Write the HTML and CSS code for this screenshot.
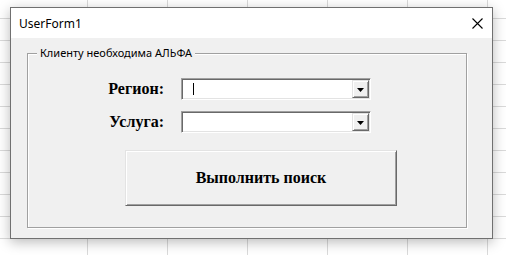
FILE: index.html
```html
<!DOCTYPE html>
<html lang="ru">
  <head>
    <meta charset="UTF-8" />
    <meta name="viewport" content="width=device-width, initial-scale=1.0" />
    <title>UserForm1</title>
    <link rel="stylesheet" href="styles.css">
  </head>
  <body>
    <div class="dialog">
      <div class="titlebar">
        <span class="title">UserForm1</span>
        <svg class="close" width="11" height="11" viewBox="0 0 11 11">
          <path d="M0.5 0.5 L10.5 10.5 M10.5 0.5 L0.5 10.5" stroke="#000" stroke-width="1.1" fill="none" />
        </svg>
      </div>

      <div class="client">
        <fieldset class="frame">
          <legend>Клиенту необходима АЛЬФА</legend>

          <div class="fields">
            <label class="lbl">Регион:</label>
            <div class="combo">
              <span class="caret"></span>
              <span class="drop">
                <svg width="7" height="4" viewBox="0 0 7 4"><polygon points="0,0 7,0 3.5,4" fill="#000" /></svg>
              </span>
            </div>

            <label class="lbl">Услуга:</label>
            <div class="combo">
              <span class="drop">
                <svg width="7" height="4" viewBox="0 0 7 4"><polygon points="0,0 7,0 3.5,4" fill="#000" /></svg>
              </span>
            </div>
          </div>

          <button class="search">Выполнить поиск</button>
        </fieldset>
      </div>
    </div>
  </body>
</html>
```

FILE: styles.css
```css
body {
  margin: 0;
  width: 506px;
  height: 255px;
  overflow: hidden;
  background-color: #fff;
  background-image:
    repeating-linear-gradient(to bottom, transparent 0, transparent 18px, #dadada 18px, #dadada 19px, transparent 19px, transparent 22px),
    repeating-linear-gradient(to right, transparent 0, transparent 79px, #dadada 79px, #dadada 80px);
  background-position: 0 0, 8px 0;
  background-repeat: repeat, no-repeat;
  background-size: 100% 22px, 100% 100%;
}
.dialog {
  margin: 7px 0 0 10px;
  width: 481px;
  height: 230px;
  border: 1px solid #707070;
  background: #f0f0f0;
  box-shadow: 0 3px 12px rgba(0, 0, 0, 0.28);
}
.titlebar {
  height: 30px;
  background: #fff;
  display: flex;
  align-items: center;
  justify-content: space-between;
  padding: 0 9px 0 8px;
}
.title {
  font-family: "Noto Sans", sans-serif;
  font-size: 12px;
  color: #000;
}
.close {
  display: block;
}
.client {
  height: 200px;
  overflow: hidden;
}
.frame {
  margin: 8px 25px 0 16px;
  padding: 18px 0 21px;
  border: 1px solid #a0a0a0;
  box-shadow: 1px 1px 0 #fff, inset 1px 1px 0 #fff;
  min-width: 0;
}
.frame legend {
  margin-left: 9px;
  padding: 0 3px;
  font-family: "Noto Sans", sans-serif;
  font-size: 11px;
  line-height: 14px;
  color: #000;
  background: #f0f0f0;
}
.fields {
  display: grid;
  grid-template-columns: 136px 190px;
  grid-auto-rows: 22px;
  column-gap: 17px;
  row-gap: 11px;
  align-items: center;
}
.lbl {
  justify-self: end;
  font-family: "Liberation Serif", serif;
  font-weight: bold;
  font-size: 16px;
  color: #000;
}
.combo {
  box-sizing: border-box;
  height: 22px;
  position: relative;
  display: flex;
  justify-content: flex-end;
  align-items: stretch;
  background: #fff;
  border-top: 1px solid #a0a0a0;
  border-left: 1px solid #a0a0a0;
  border-right: 1px solid #fff;
  border-bottom: 1px solid #fff;
  box-shadow: inset 1px 1px 0 #696969, inset -1px -1px 0 #e3e3e3;
  padding: 1px;
}
.caret {
  position: absolute;
  left: 11px;
  top: 4px;
  width: 1px;
  height: 12px;
  background: #000;
}
.drop {
  box-sizing: border-box;
  width: 17px;
  display: flex;
  align-items: center;
  justify-content: center;
  background: #f0f0f0;
  border-top: 1px solid #e3e3e3;
  border-left: 1px solid #e3e3e3;
  border-right: 1px solid #696969;
  border-bottom: 1px solid #696969;
  box-shadow: inset 1px 1px 0 #fff, inset -1px -1px 0 #a0a0a0;
}
.drop svg {
  display: block;
  margin-top: 1px;
}
.search {
  display: block;
  box-sizing: border-box;
  margin: 17px 0 0 97px;
  width: 272px;
  height: 56px;
  padding: 0;
  background: #f0f0f0;
  border-top: 1px solid #e3e3e3;
  border-left: 1px solid #e3e3e3;
  border-right: 1px solid #696969;
  border-bottom: 1px solid #696969;
  box-shadow: inset 1px 1px 0 #fff, inset -1px -1px 0 #a0a0a0;
  font-family: "Liberation Serif", serif;
  font-weight: bold;
  font-size: 16px;
  color: #000;
}
```
